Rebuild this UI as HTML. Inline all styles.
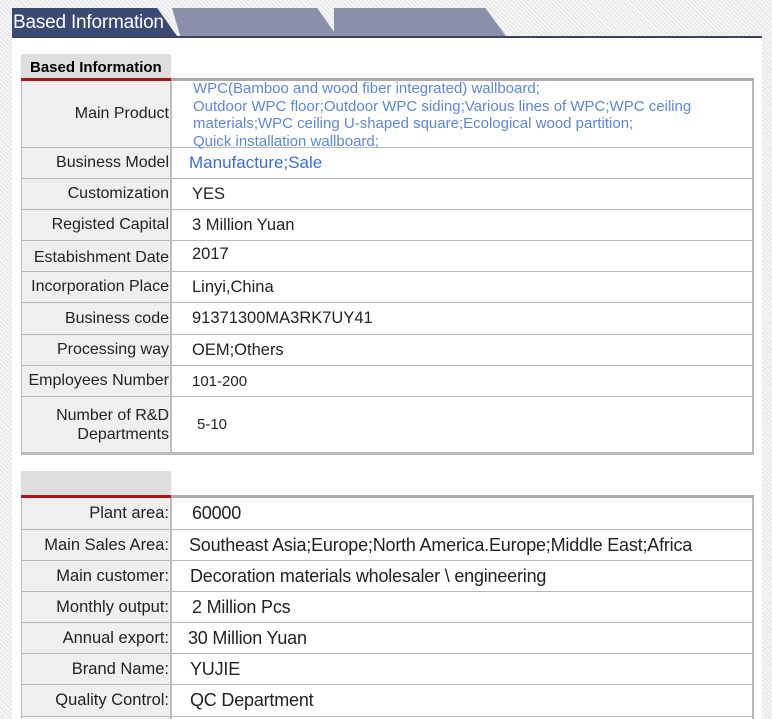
<!DOCTYPE html>
<html><head><style>
*{margin:0;padding:0;box-sizing:border-box}
html,body{width:772px;height:719px;overflow:hidden}
body{position:relative;font-family:"Liberation Sans",Arial,sans-serif;
background:#f4f4f4 repeating-linear-gradient(45deg,#f6f6f6 0,#f6f6f6 2px,#e2e2e2 2px,#e2e2e2 3px);}
.panel{position:absolute;left:12px;top:38px;width:750px;height:681px;background:#fff}
.bar{position:absolute;left:12px;top:36px;width:750px;height:2px;background:#3d4360}
.t1{position:absolute;left:12px;top:8px;width:165px;height:28px;background:#3a4a73;clip-path:polygon(0 0,88% 0,100% 100%,0 100%);color:#fff;font-size:19px;line-height:30px;padding-left:1px;letter-spacing:-0.2px;white-space:nowrap}
.t2{position:absolute;left:172px;top:8px;width:165px;height:28px;background:#8a90aa;clip-path:polygon(0 0,88% 0,100% 100%,5% 100%)}
.t3{position:absolute;left:334px;top:8px;width:172px;height:28px;background:#8a90aa;clip-path:polygon(0 0,88% 0,100% 100%,0 100%)}
.tab{position:absolute;left:21px;width:150px;height:26px;background:#dedede;font-weight:bold;font-size:15px;line-height:28px;padding-left:9px;white-space:nowrap;overflow:visible}
.red{position:absolute;left:21px;width:150px;height:3px;background:#a8161a}
.gl{position:absolute;left:171px;width:583px;height:3px;background:#aaa}
.tbl{position:absolute;left:21px;width:733px;border-right:2px solid #bbb;border-left:1px solid #bbb}
.r{position:relative;border-bottom:1px solid #b8b8b8;display:flex}
.l{width:150px;flex:none;background:#efefef;border-right:2px solid #bdbdbd;text-align:right;font-size:16px;color:#222;overflow:hidden;white-space:nowrap;display:flex;align-items:center;justify-content:flex-end;padding-right:1px}
.v{flex:1;font-size:16.5px;color:#222;display:flex;align-items:center;padding-left:20px;white-space:nowrap}
.t2b .l{font-size:16.5px}
.t2b .v{font-size:18px;letter-spacing:-0.2px}
.blue{color:#3a6fd8}
</style></head><body>
<div class="panel"></div>
<div class="t2"></div><div class="t3"></div>
<div class="t1">Based Information</div>
<div class="bar"></div>

<div class="tab" style="top:54px">Based Information</div>
<div class="red" style="top:78px"></div>
<div class="gl" style="top:78px"></div>
<div class="tbl" style="top:81px">
<div class="r" style="height:67px"><div class="l">Main Product</div><div class="v blue" style="font-size:15px;line-height:17.5px;white-space:normal;align-items:flex-start;padding-top:0;padding-left:21px;padding-right:20px;color:#5b86e0;margin-top:-1px">WPC(Bamboo and wood fiber integrated) wallboard;<br>Outdoor WPC floor;Outdoor WPC siding;Various lines of WPC;WPC ceiling materials;WPC ceiling U-shaped square;Ecological wood partition;<br>Quick installation wallboard;</div></div>
<div class="r" style="height:31px"><div class="l">Business Model</div><div class="v blue" style="padding-left:17px;font-size:17px">Manufacture;Sale</div></div>
<div class="r" style="height:31px"><div class="l">Customization</div><div class="v">YES</div></div>
<div class="r" style="height:31px"><div class="l">Registed Capital</div><div class="v">3 Million Yuan</div></div>
<div class="r" style="height:31px"><div class="l" style="padding-top:4px">Estabishment Date</div><div class="v" style="padding-bottom:4px">2017</div></div>
<div class="r" style="height:31px"><div class="l">Incorporation Place</div><div class="v">Linyi,China</div></div>
<div class="r" style="height:32px"><div class="l">Business code</div><div class="v">91371300MA3RK7UY41</div></div>
<div class="r" style="height:31px"><div class="l">Processing way</div><div class="v">OEM;Others</div></div>
<div class="r" style="height:31px"><div class="l">Employees Number</div><div class="v" style="font-size:15px">101-200</div></div>
<div class="r" style="height:58px;border-bottom:3px solid #bbb"><div class="l" style="white-space:normal;line-height:19px;padding-right:1px">Number of R&amp;D<br>Departments</div><div class="v" style="font-size:15px;padding-left:25px">5-10</div></div>
</div>

<div class="tab" style="top:471px"></div>
<div class="red" style="top:495px"></div>
<div class="gl" style="top:495px"></div>
<div class="tbl t2b" style="top:498px">
<div class="r" style="height:32px"><div class="l">Plant area:</div><div class="v">60000</div></div>
<div class="r" style="height:31px"><div class="l">Main Sales Area:</div><div class="v" style="padding-left:17px">Southeast Asia;Europe;North America.Europe;Middle East;Africa</div></div>
<div class="r" style="height:31px"><div class="l">Main customer:</div><div class="v" style="padding-left:18px">Decoration materials wholesaler \ engineering</div></div>
<div class="r" style="height:31px"><div class="l">Monthly output:</div><div class="v">2 Million Pcs</div></div>
<div class="r" style="height:31px"><div class="l">Annual export:</div><div class="v" style="padding-left:16px">30 Million Yuan</div></div>
<div class="r" style="height:31px"><div class="l">Brand Name:</div><div class="v" style="padding-left:18px">YUJIE</div></div>
<div class="r" style="height:32px"><div class="l">Quality Control:</div><div class="v" style="padding-left:18px">QC Department</div></div>
<div class="r" style="height:10px"><div class="l"></div><div class="v"></div></div>
</div>
</body></html>
